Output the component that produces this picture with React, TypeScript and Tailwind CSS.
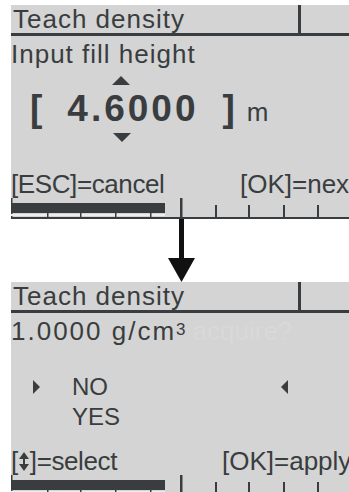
const ink = "#3a3d40";

function Header() {
  return (
    <div className="flex h-[31px] border-b-[3px] border-[#3a3d40]">
      <div className="w-[287px] pl-[2px] text-[26px] leading-[26px] pt-[1px] tracking-[1px] whitespace-nowrap">Teach density</div>
      <div className="w-[3px] bg-[#3a3d40]" />
      <div className="flex-1" />
    </div>
  );
}

function Ruler() {
  const under = [36, 69, 104, 139];
  const ticks = [204, 237, 272, 306];
  return (
    <svg width="338" height="21" className="mt-[1px] block shrink-0">
      <rect x="0" y="0" width="1.5" height="21" fill={ink} />
      <rect x="0" y="5" width="154" height="10" fill={ink} />
      <rect x="0" y="16" width="154" height="2" fill="#ededed" />
      {under.map((x) => (
        <rect key={x} x={x} y="15" width="1.5" height="4" fill={ink} />
      ))}
      <rect x="0" y="19" width="338" height="2" fill={ink} />
      <rect x="169" y="0" width="2.5" height="21" fill={ink} />
      {ticks.map((x) => (
        <rect key={x} x={x} y="7" width="2" height="14" fill={ink} />
      ))}
    </svg>
  );
}

function Footer({ left, right, rightX }: { left: React.ReactNode; right: string; rightX: number }) {
  return (
    <div className="flex h-[26px] text-[26px] leading-[26px] whitespace-nowrap">
      <div className="shrink-0 tracking-[-0.4px]" style={{ width: rightX }}>
        {left}
      </div>
      <div className="shrink-0">{right}</div>
    </div>
  );
}

export default function App() {
  return (
    <div className="w-[349px] h-[492px] overflow-hidden bg-white text-[#3a3d40] font-['Liberation_Sans',Arial,sans-serif]">
      {/* step 1 */}
      <div className="ml-[11px] mt-[5px] w-[338px] bg-[#d3d4d3] flex flex-col overflow-hidden">
        <Header />
        <div className="mt-[5px] h-[26px] text-[26px] leading-[26px] tracking-[1px] whitespace-nowrap">Input fill height</div>
        <div className="mt-[9px] ml-[101px] w-0 h-0 border-x-[9px] border-x-transparent border-b-[9px] border-b-[#3a3d40]" />
        <div className="mt-[5px] flex items-baseline h-[37px] whitespace-nowrap">
          <span className="ml-[19px] font-bold text-[37px] leading-[37px]">[</span>
          <span className="ml-[25px] font-bold text-[37px] leading-[37px] tracking-[3px]">4.6000</span>
          <span className="ml-[24px] font-bold text-[37px] leading-[37px]">]</span>
          <span className="ml-[12px] text-[26px] leading-[26px]">m</span>
        </div>
        <div className="mt-[6px] ml-[102px] w-0 h-0 border-x-[9px] border-x-transparent border-t-[9px] border-t-[#3a3d40]" />
        <div className="mt-[29px]">
          <Footer left="[ESC]=cancel" right="[OK]=next" rightX={229} />
        </div>
        <Ruler />
      </div>

      {/* arrow */}
      <svg width="349" height="63" className="block">
        <rect x="179" y="0" width="5" height="40" fill="#111" />
        <polygon points="168,39 195,39 181.5,63" fill="#111" />
      </svg>

      {/* step 2 */}
      <div className="ml-[11px] w-[338px] bg-[#d3d4d3] flex flex-col overflow-hidden">
        <Header />
        <div className="mt-[5px] h-[26px] text-[26px] leading-[26px] whitespace-nowrap">
          <span className="tracking-[2px]">1.0000 g/cm</span>
          <span className="text-[17px] align-top relative -top-[1px]">3</span>
          <span className="ml-[7px] text-[#d8d9d8]">acquire?</span>
        </div>
        <div className="mt-[31px] flex items-center h-[24px] text-[24px] leading-[24px]">
          <div className="ml-[22px] w-0 h-0 border-y-[7px] border-y-transparent border-l-[7px] border-l-[#3a3d40]" />
          <span className="ml-[32px] w-[209px]">NO</span>
          <div className="w-0 h-0 border-y-[7px] border-y-transparent border-r-[7px] border-r-[#3a3d40]" />
        </div>
        <div className="mt-[6px] ml-[61px] h-[24px] text-[24px] leading-[24px]">YES</div>
        <div className="mt-[19px]">
          <Footer
            left={
              <span className="inline-flex items-center">
                [
                <svg width="10" height="19" viewBox="0 0 10 19" className="mx-[1px]">
                  <polygon points="5,0 10,7 0,7" fill={ink} />
                  <rect x="4" y="7" width="2" height="5" fill={ink} />
                  <polygon points="0,12 10,12 5,19" fill={ink} />
                </svg>
                ]=select
              </span>
            }
            right="[OK]=apply"
            rightX={211}
          />
        </div>
        <Ruler />
      </div>
    </div>
  );
}
